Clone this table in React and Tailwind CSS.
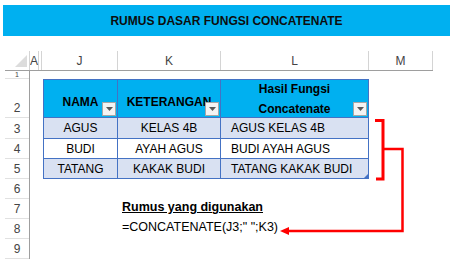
import React from 'react';

const font = { fontFamily: '"Liberation Sans", Arial, sans-serif' };

// small Excel-style autofilter button
const FilterButton = () => (
  <div className="absolute right-[1px] bottom-[1px] w-[14px] h-[14px] border border-[#a6a6a6] bg-[#f3f3f3] flex items-center justify-center z-10">
    <svg width="7" height="4" viewBox="0 0 7 4">
      <path d="M0 0 H7 L3.5 4 Z" fill="#595959" />
    </svg>
  </div>
);

const rows = [
  { n: '1', h: 'h-[8px]', t: 'text-[7px] leading-[7px]' },
  { n: '2', h: 'h-[39px]', t: 'pb-[2px] leading-[14px]' },
  { n: '3', h: 'h-[21px]', t: 'pb-[2px] leading-[14px]' },
  { n: '4', h: 'h-[20px]', t: 'pb-[2px] leading-[14px]' },
  { n: '5', h: 'h-[20px]', t: 'pb-[2px] leading-[14px]' },
  { n: '6', h: 'h-[20px]', t: 'pb-[2px] leading-[14px]' },
  { n: '7', h: 'h-[20px]', t: 'pb-[2px] leading-[14px]' },
  { n: '8', h: 'h-[20px]', t: 'pb-[2px] leading-[14px]' },
  { n: '9', h: 'h-[20px]', t: 'pb-[2px] leading-[14px]' },
];

const data = [
  { nama: 'AGUS', ket: 'KELAS 4B', hasil: 'AGUS KELAS 4B', bg: 'bg-[#d9e1f2]', h: 'h-[21px] border-b' },
  { nama: 'BUDI', ket: 'AYAH AGUS', hasil: 'BUDI AYAH AGUS', bg: 'bg-white', h: 'h-[20px] border-b' },
  { nama: 'TATANG', ket: 'KAKAK BUDI', hasil: 'TATANG KAKAK BUDI', bg: 'bg-[#d9e1f2]', h: 'h-[19px]' },
];

export default function App() {
  return (
    <div className="relative w-[455px] h-[263px] bg-white overflow-hidden text-black" style={font}>
      {/* title banner */}
      <div className="mt-[5px] ml-[3px] w-[447px] h-[31px] bg-[#00b0f0] flex items-center justify-center text-[12px] font-bold text-[#0d0d0d]">
        RUMUS DASAR FUNGSI CONCATENATE
      </div>

      {/* column letters */}
      <div className="mt-[15px] ml-[5px] w-[428px] h-[20px] flex border-b border-[#9e9e9e] text-[12px] text-[#444]">
        <div className="w-[25px] relative border-r border-[#d4d4d4]">
          <svg className="absolute left-[10px] top-[4px]" width="12" height="12" viewBox="0 0 12 12">
            <path d="M12 0 V12 H0 Z" fill="#dcdcdc" />
          </svg>
        </div>
        <div className="w-[9px] border-r border-[#d4d4d4] flex items-center justify-center">A</div>
        <div className="w-[3px] border-r border-[#d4d4d4]" />
        <div className="w-[76px] border-r border-[#d4d4d4] flex items-center justify-center">J</div>
        <div className="w-[103px] border-r border-[#d4d4d4] flex items-center justify-center">K</div>
        <div className="w-[148px] border-r border-[#d4d4d4] flex items-center justify-center">L</div>
        <div className="w-[64px] border-r border-[#d4d4d4] flex items-center justify-center">M</div>
      </div>

      <div className="flex">
        {/* row numbers */}
        <div className="flex flex-col text-[12px] text-[#444]">
          {rows.map((r) => (
            <div key={r.n} className="flex">
              <div className={`${r.h} ml-[5px] w-[24px] border-b border-[#e1e1e1] flex items-end justify-center ${r.t}`}>
                {r.n}
              </div>
              <div className="w-[1px] bg-[#9e9e9e]" />
            </div>
          ))}
        </div>

        {/* sheet content */}
        <div className="flex flex-col">
          <div className="h-[8px]" />
          <div className="ml-[13px] w-[326px] border border-[#4472c4] grid grid-cols-[74px_103px_147px] text-[12px]">
            <div className="relative h-[38px] bg-[#00b0f0] border-r border-b border-[#4472c4] flex items-center justify-center pt-[6px] font-bold">
              NAMA
              <FilterButton />
            </div>
            <div className="relative h-[38px] bg-[#00b0f0] border-r border-b border-[#4472c4] flex items-center justify-center pt-[6px] font-bold">
              KETERANGAN
              <FilterButton />
            </div>
            <div className="relative h-[38px] bg-[#00b0f0] border-b border-[#4472c4] flex flex-col items-center justify-center font-bold leading-[20px]">
              <span>Hasil Fungsi</span>
              <span>Concatenate</span>
              <FilterButton />
            </div>

            {data.map((d, i) => (
              <React.Fragment key={d.nama}>
                <div className={`${d.h} ${d.bg} border-r border-[#4472c4] flex items-center justify-center`}>{d.nama}</div>
                <div className={`${d.h} ${d.bg} border-r border-[#4472c4] flex items-center justify-center`}>{d.ket}</div>
                <div className={`relative ${d.h} ${d.bg} border-[#4472c4] flex items-center pl-[10px]`}>
                  {d.hasil}
                  {i === data.length - 1 && (
                    <svg className="absolute right-0 bottom-0" width="4" height="4" viewBox="0 0 4 4">
                      <path d="M4 0 V4 H0 Z" fill="#4472c4" />
                    </svg>
                  )}
                </div>
              </React.Fragment>
            ))}
          </div>

          <div className="h-[20px]" />
          <div className="h-[20px] ml-[92px] flex items-end pb-[2px] text-[12.5px] font-bold underline whitespace-nowrap">
            Rumus yang digunakan
          </div>
          <div className="h-[20px] ml-[92px] flex items-end pb-[2px] text-[12.5px] whitespace-nowrap">
            =CONCATENATE(J3;" ";K3)
          </div>
        </div>
      </div>

      {/* red bracket and arrow back to the formula */}
      <svg className="absolute inset-0 pointer-events-none" width="455" height="263" viewBox="0 0 455 263">
        <polyline points="375,120.5 383,120.5 383,179 376,179" fill="none" stroke="#ff0000" strokeWidth="3" />
        <polyline points="384,149 402.5,149 402.5,231 287,231" fill="none" stroke="#ff0000" strokeWidth="2.5" />
        <path d="M280 231 L289 227 L289 235 Z" fill="#ff0000" />
      </svg>
    </div>
  );
}
